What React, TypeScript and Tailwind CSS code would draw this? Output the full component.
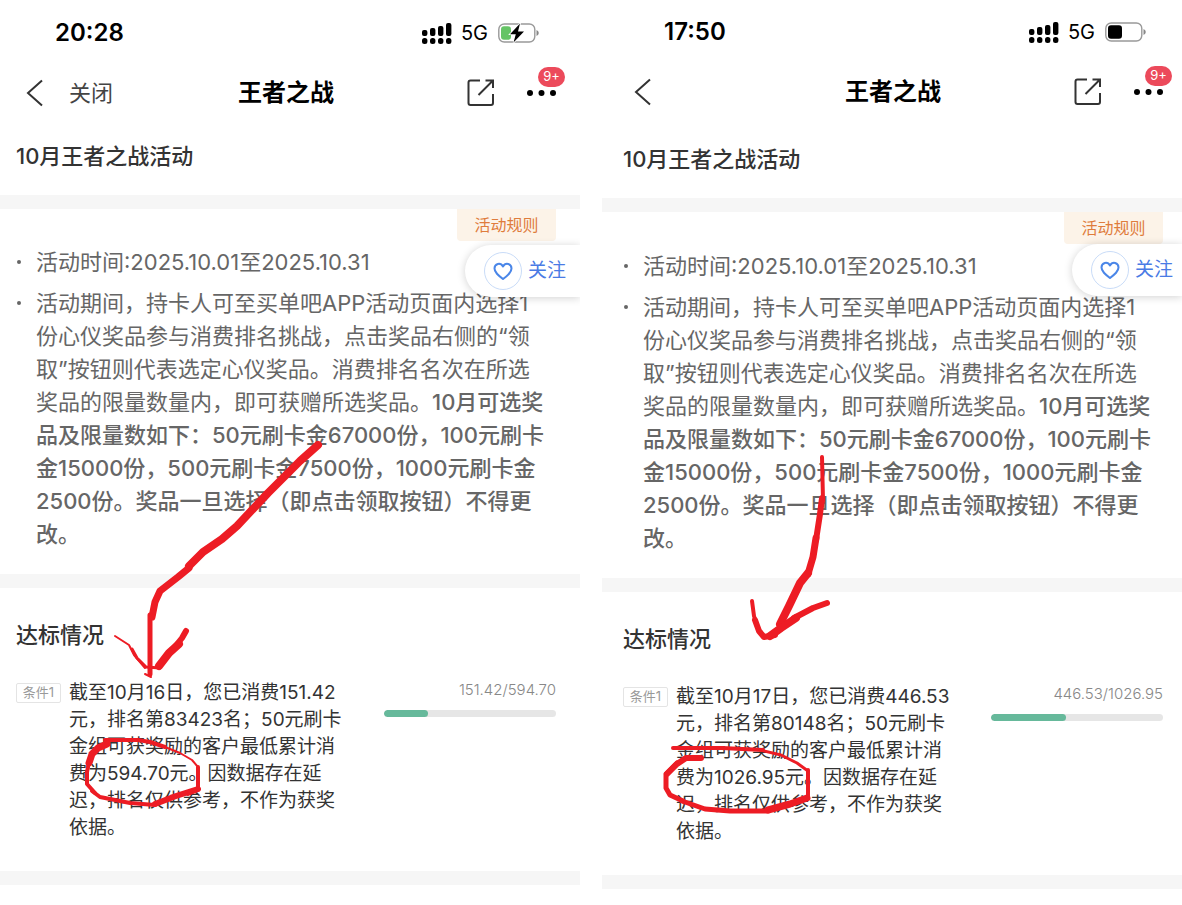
import * as React from 'react';
import clsx from 'clsx';

interface Stroke {
  d: string;
  w: number;
}

interface Screen {
  id: string;
  time: string;
  charging: boolean;
  closable: boolean;
  summary: string[];
  spent: number;
  target: number;
  // left edge of the pen drawing's coordinate system
  originX: number;
  strokes: Stroke[];
}

const RULE_LINES = [
  '活动期间，持卡人可至买单吧APP活动页面内选择1',
  '份心仪奖品参与消费排名挑战，点击奖品右侧的“领',
  '取”按钮则代表选定心仪奖品。消费排名名次在所选',
];

const BOLD_LINES = [
  '品及限量数如下：50元刷卡金67000份，100元刷卡',
  '金15000份，500元刷卡金7500份，1000元刷卡金',
  '2500份。奖品一旦选择（即点击领取按钮）不得更',
  '改。',
];

const SCREENS: Screen[] = [
  {
    id: 'first',
    time: '20:28',
    charging: true,
    closable: true,
    summary: [
      '截至10月16日，您已消费151.42',
      '元，排名第83423名；50元刷卡',
      '金组可获奖励的客户最低累计消',
      '费为594.70元。因数据存在延',
      '迟，排名仅供参考，不作为获奖',
      '依据。',
    ],
    spent: 151.42,
    target: 594.7,
    originX: 0,
    strokes: [
      { d: 'M318 445 L300 461 L268 493 L237 526 L222 539 L203 552 L189 566', w: 8 },
      { d: 'M189 568 L178 577 L160 591 L155 602 L152 617', w: 7 },
      { d: 'M150 615 V674', w: 5 },
      { d: 'M145 674 L151 677', w: 2 },
      { d: 'M115 636 L129 645 L134 655 L145 668', w: 2 },
      { d: 'M132 649 L137 658 L146 667 L160 668', w: 3 },
      { d: 'M159 666 L169 653 L179 644', w: 8 },
      { d: 'M174 648 L182 638 L186 631', w: 6 },
      { d: 'M105 740 H138 L150 742 L165 747', w: 4 },
      { d: 'M160 745 L180 753 L192 760 L198 767', w: 2 },
      { d: 'M198 767 V790 L188 794', w: 4 },
      { d: 'M198 789 L176 796 L155 804', w: 6 },
      { d: 'M155 805 L130 803 L100 797 L92 791', w: 4 },
      { d: 'M95 793 L87 784 V772 L89 762', w: 4 },
      { d: 'M89 763 L92 754 L98 748 L107 744', w: 7 },
    ],
  },
  {
    id: 'second',
    time: '17:50',
    charging: false,
    closable: false,
    summary: [
      '截至10月17日，您已消费446.53',
      '元，排名第80148名；50元刷卡',
      '金组可获奖励的客户最低累计消',
      '费为1026.95元。因数据存在延',
      '迟，排名仅供参考，不作为获奖',
      '依据。',
    ],
    spent: 446.53,
    target: 1026.95,
    originX: 602,
    strokes: [
      { d: 'M822 457 L823 500 L820 514', w: 4 },
      { d: 'M822 498 L820 514 L816 540', w: 6 },
      { d: 'M816 538 L813 557 L808 574', w: 7 },
      { d: 'M808 573 L800 583 L789 606 L780 624', w: 8 },
      { d: 'M752 601 L754 616 L758 629', w: 4 },
      { d: 'M755 620 L759 631 L764 637 L775 635', w: 6 },
      { d: 'M770 636 L781 628 L796 618', w: 8 },
      { d: 'M794 618 L813 608 L827 603', w: 6 },
      { d: 'M673 748 H722 L763 750', w: 4 },
      { d: 'M760 750 L781 755 L797 763 L808 771', w: 3 },
      { d: 'M808 770 V798', w: 4 },
      { d: 'M807 798 L790 804 L768 810', w: 7 },
      { d: 'M768 811 H730 L705 809 L682 801', w: 5 },
      { d: 'M683 801 L670 795 L666 788 V774 L677 763', w: 5 },
      { d: 'M667 774 L677 764 L686 758 L701 758', w: 6 },
    ],
  },
];

export default function App() {
  return (
    <main
      className="grid grid-cols-2 gap-x-[22px] bg-white"
      style={{ fontFamily: '"Inter", "Noto Sans CJK SC", sans-serif' }}
    >
      {SCREENS.map((s) => (
        <Phone key={s.id} screen={s} />
      ))}
    </main>
  );
}

function Phone({ screen }: { screen: Screen }) {
  const first = screen.closable;
  return (
    <article className="relative min-w-0 pb-4">
      <div
        className={clsx(
          'flex items-center justify-between',
          first ? 'h-[66px] pr-[41px] pl-[55px]' : 'h-16 pr-[36px] pl-[62px]',
        )}
      >
        <time className="text-2xl font-semibold text-black">{screen.time}</time>
        <div className="flex items-center">
          <Signal />
          <span className="mr-[10px] ml-[9px] text-xl text-black">5G</span>
          <Battery charging={screen.charging} />
        </div>
      </div>

      <header
        className={clsx(
          'relative flex items-center justify-between',
          first ? 'h-[54px] pr-6 pl-[26px]' : 'h-14 pr-[19px] pl-8',
        )}
      >
        <div className="flex items-center gap-[25px]">
          <button type="button" aria-label="返回">
            <svg width="18" height="28" viewBox="0 0 18 28" fill="none" stroke="#333" strokeWidth="2">
              <path d="M16 1.5 L2 14 L16 26.5" />
            </svg>
          </button>
          {screen.closable && (
            <button type="button" className="text-[22px] text-[#444]">
              关闭
            </button>
          )}
        </div>
        <h1
          className={clsx(
            'absolute inset-x-0 text-center text-2xl font-bold text-black',
            first ? 'pr-2' : 'pl-[2px]',
          )}
        >
          王者之战
        </h1>
        <div className="relative flex items-center gap-8">
          <button type="button" aria-label="分享">
            <svg width="28" height="28" viewBox="0 0 28 28" fill="none" stroke="#333" strokeWidth="2">
              <path d="M13 1.5 H3.5 Q1.5 1.5 1.5 3.5 V24 Q1.5 26 3.5 26 H24 Q26 26 26 24 V15" />
              <path d="M11.5 16 L26 1.5 M18.5 1.5 H26 V9" />
            </svg>
          </button>
          <button type="button" aria-label="更多" className="relative">
            <svg width="29" height="6" viewBox="0 0 29 6">
              <circle cx="3" cy="3" r="3" />
              <circle cx="14.5" cy="3" r="3" />
              <circle cx="26" cy="3" r="3" />
            </svg>
            <span className="absolute -top-[23px] left-[11px] flex h-5 w-[27px] items-center justify-center rounded-full bg-[#ec4a5b] text-[13px] text-white">
              9+
            </span>
          </button>
        </div>
      </header>

      <h2
        className={clsx(
          'pb-[23px] text-[22px] leading-8 font-medium text-[#333]',
          first ? 'pt-5 pl-4' : 'pt-[23px] pl-[21px]',
        )}
      >
        10月王者之战活动
      </h2>
      <Divider />

      <section className="relative flex flex-col pb-[23px]">
        <button
          type="button"
          className={clsx(
            'h-8 w-[99px] self-end rounded-b bg-[#fcf3e8] text-base text-[#df7c3c]',
            first ? 'mr-6' : 'mr-[19px]',
          )}
        >
          活动规则
        </button>
        <button
          type="button"
          className={clsx(
            'absolute right-0 flex h-[52px] items-center gap-[6px] rounded-l-full bg-white pl-[19px] text-[19px] text-[#4a7be5] shadow-[0_1px_9px_rgba(0,0,0,0.18)] [clip-path:inset(-12px_0_-12px_-12px)]',
            first ? 'top-9 w-[115px]' : 'top-8 w-[110px]',
          )}
        >
          <span className="flex size-[38px] shrink-0 items-center justify-center rounded-full border border-[#c9dcf8]">
            <svg width="20" height="19" viewBox="0 0 20 19" fill="none" stroke="#4a86e8" strokeWidth="2" strokeLinejoin="round">
              <path d="M10 17 C5.5 13.5 1.5 10.5 1.5 6.5 C1.5 1.5 7.5 0 10 4.5 C12.5 0 18.5 1.5 18.5 6.5 C18.5 10.5 14.5 13.5 10 17 Z" />
            </svg>
          </span>
          <span className="shrink-0">关注</span>
        </button>
        <ul
          className={clsx(
            'flex flex-col gap-2 text-[22px] leading-[33px] whitespace-nowrap text-[#666]',
            first ? 'mt-[5px] pl-4' : 'mt-[6px] pl-[21px]',
          )}
        >
          <li className="flex">
            <Dot />
            活动时间:2025.10.01至2025.10.31
          </li>
          <li className="flex">
            <Dot />
            <p>
              {RULE_LINES.map((line) => (
                <span key={line} className="block">
                  {line}
                </span>
              ))}
              <span className="block">
                奖品的限量数量内，即可获赠所选奖品。<b className="font-medium">10月可选奖</b>
              </span>
              {BOLD_LINES.map((line) => (
                <b key={line} className="block font-medium">
                  {line}
                </b>
              ))}
            </p>
          </li>
        </ul>
      </section>
      <Divider />

      <section className={clsx('pt-[31px] pb-[30px]', first ? 'pr-6 pl-4' : 'pr-[19px] pl-[21px]')}>
        <h2 className="text-[22px] leading-8 font-medium text-[#333]">达标情况</h2>
        <div className="mt-7 flex items-start">
          <span className="mt-1 flex h-5 w-[45px] shrink-0 items-center justify-center rounded-xs border border-[#e4e4e4] text-[13px] text-[#999]">
            条件1
          </span>
          <p className="ml-2 shrink-0 text-[19px] leading-[27px] whitespace-nowrap text-[#333]">
            {screen.summary.map((line) => (
              <span key={line} className="block">
                {line}
              </span>
            ))}
          </p>
          <Progress spent={screen.spent} target={screen.target} />
        </div>
      </section>
      <Divider />

      <svg
        className="pointer-events-none absolute top-0 left-0 overflow-visible"
        width="580"
        height="905"
        fill="none"
        stroke="#ed1c24"
        strokeLinecap="round"
        strokeLinejoin="round"
      >
        <g transform={`translate(${-screen.originX} 0)`}>
          {screen.strokes.map((s) => (
            <path key={s.d} d={s.d} strokeWidth={s.w} />
          ))}
        </g>
      </svg>
    </article>
  );
}

function Divider() {
  return <div className="h-[14px] bg-[#f6f6f6]" />;
}

function Dot() {
  return <span className="mt-[14px] mr-[15px] ml-px size-1 shrink-0 rounded-full bg-[#666]" />;
}

function Progress({ spent, target }: { spent: number; target: number }) {
  return (
    <div className="ml-auto w-[172px]">
      <div className="text-right text-[15px] leading-[22px] font-light text-[#888]">
        {spent.toFixed(2)}/{target.toFixed(2)}
      </div>
      <div
        role="progressbar"
        aria-label="消费进度"
        aria-valuenow={spent}
        aria-valuemax={target}
        className="mt-[9px] h-[7px] overflow-hidden rounded-full bg-[#e6e6e6]"
      >
        <div
          className="h-full rounded-full bg-[#66b99b]"
          style={{ width: `${(spent / target) * 100}%` }}
        />
      </div>
    </div>
  );
}

function Signal() {
  return (
    <svg width="30" height="21" viewBox="0 0 30 21">
      <rect x="0" y="7" width="5.4" height="6" rx="2" />
      <rect x="8" y="5" width="5.4" height="8" rx="2" />
      <rect x="16" y="3" width="5.4" height="10" rx="2" />
      <rect x="24" y="0" width="5.4" height="13" rx="2" />
      <rect x="0" y="15" width="5.4" height="6" rx="2.5" />
      <rect x="8" y="15" width="5.4" height="6" rx="2.5" />
      <rect x="16" y="15" width="5.4" height="6" rx="2.5" />
      <rect x="24" y="15" width="5.4" height="6" rx="2.5" />
    </svg>
  );
}

function Battery({ charging }: { charging: boolean }) {
  return (
    <svg width="41" height="20" viewBox="0 0 41 20">
      <rect x="0.8" y="1" width="36" height="18" rx="5.5" fill="none" stroke="#999" strokeWidth="1.4" />
      <path d="M38.5 7 Q40.8 8 40.8 10 Q40.8 12 38.5 13 Z" fill="#888" />
      <rect x="3" y="3.2" width={charging ? 10 : 14} height="13.6" rx="3" fill={charging ? '#65c466' : '#000'} />
      {charging && (
        <path
          d="M22 0.5 L12 11.2 H17.8 L15.5 19.5 L26 8.5 H20 Z"
          stroke="#fff"
          strokeWidth="1.6"
          paintOrder="stroke"
        />
      )}
    </svg>
  );
}
